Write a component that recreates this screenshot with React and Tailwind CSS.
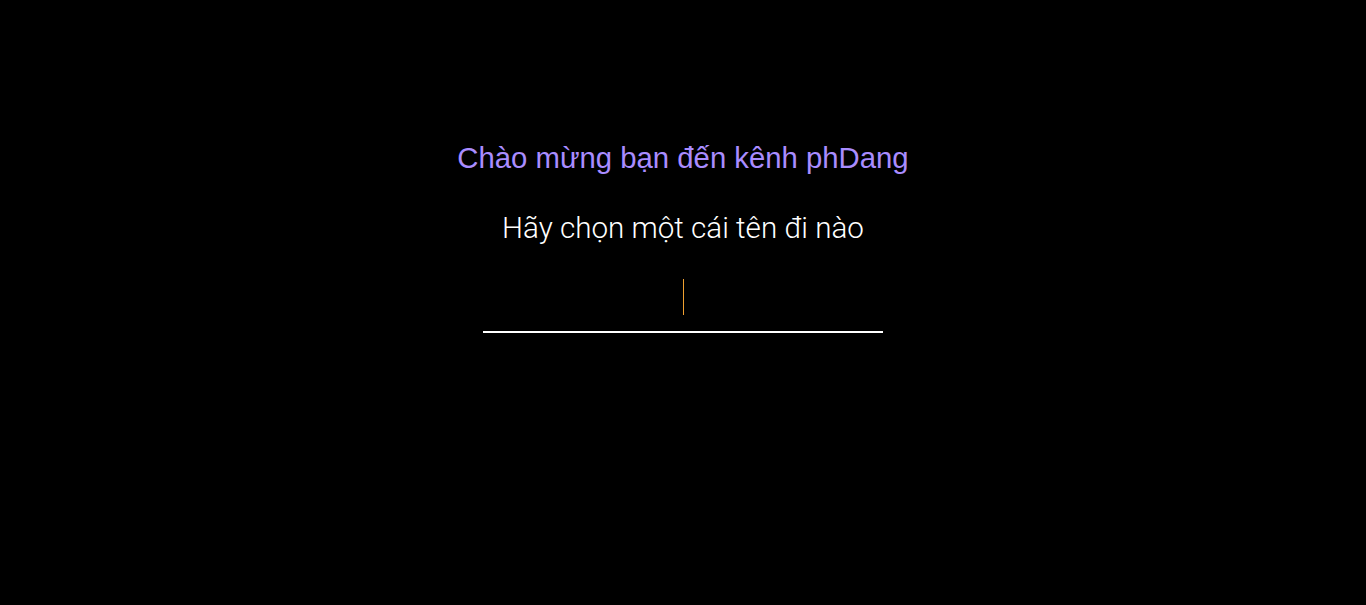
import React from "react";

export default function App() {
  return (
    <div className="w-full h-[605px] bg-black flex flex-col items-center overflow-hidden" style={{ fontFamily: '"Liberation Sans", Arial, sans-serif' }}>
      <h1 className="mt-[139px] text-[29.3px] leading-[38px] text-[#a98cff] font-normal">Chào mừng bạn đến kênh phDang</h1>
      <p className="mt-[32px] text-[29.6px] leading-[38px] text-white font-light" style={{ fontFamily: 'Roboto, "Liberation Sans", sans-serif', fontWeight: 300 }}>Hãy chọn một cái tên đi nào</p>
      <div className="mt-[32px] w-[400px] h-[54px] border-b-2 border-white flex justify-center">
        <div className="w-px h-[36px] bg-[#f0a030]"></div>
      </div>
    </div>
  );
}
